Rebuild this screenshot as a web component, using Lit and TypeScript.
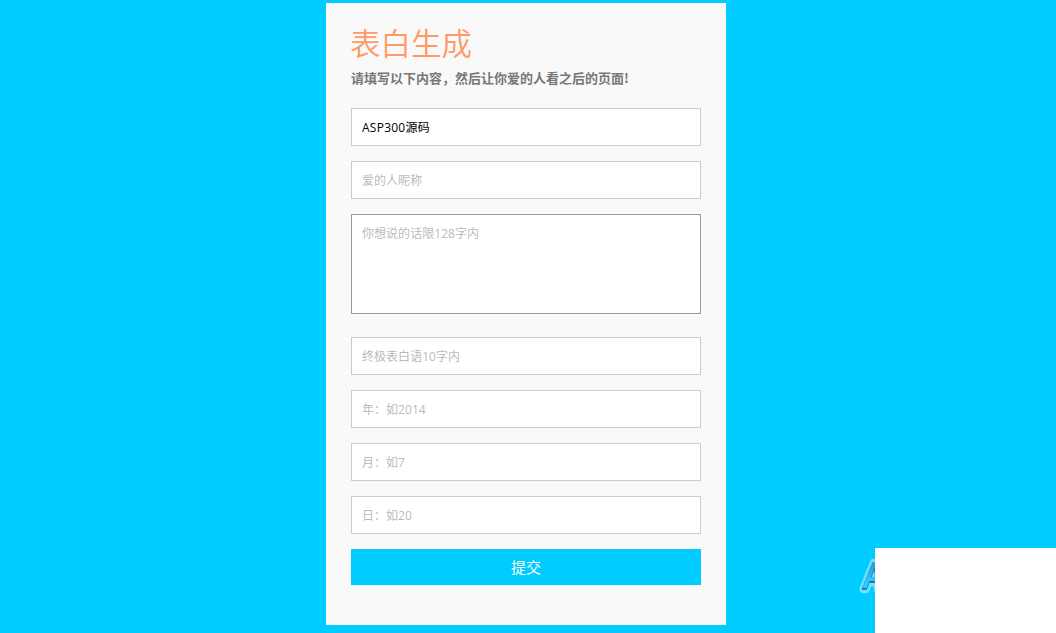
import { LitElement, html, css } from "lit";
import { customElement, property } from "lit/decorators.js";

@customElement("form-field")
export class FormField extends LitElement {
  static styles = css`
    :host {
      display: block;
    }

    .control {
      display: block;
      box-sizing: border-box;
      width: 350px;
      height: 38px;
      margin: 0;
      padding: 0 10px;
      border: 1px solid #ccc;
      border-radius: 0;
      background: #fff;
      color: #000;
      font: 12px/18px "Open Sans", "Noto Sans CJK SC", sans-serif;
      letter-spacing: 0.25px;
      outline: none;
    }

    .control::placeholder {
      color: #bbb;
      opacity: 1;
      letter-spacing: 0.04px;
    }

    .multiline {
      height: 100px;
      padding: 10px;
      border-color: #999;
      resize: none;
      overflow: auto;
    }
  `;

  @property() name = "";
  @property() value = "";
  @property() placeholder = "";
  @property({ type: Boolean }) multiline = false;

  render() {
    if (this.multiline) {
      return html`<textarea
        class="control multiline"
        name=${this.name}
        placeholder=${this.placeholder}
        .value=${this.value}
      ></textarea>`;
    }
    return html`<input
      class="control"
      type="text"
      name=${this.name}
      placeholder=${this.placeholder}
      .value=${this.value}
    />`;
  }
}

@customElement("app-root")
export class AppRoot extends LitElement {
  static styles = css`
    :host {
      display: block;
      position: relative;
      box-sizing: border-box;
      height: 100vh;
      padding: 3px 4px 0 0;
      overflow: hidden;
      background: #0cf;
      font-family: "Open Sans", "Noto Sans CJK SC", sans-serif;
    }

    .panel {
      box-sizing: border-box;
      width: 400px;
      height: 622px;
      margin: 0 auto;
      padding: 19px 25px 0;
      background: #f9f9f9;
    }

    .title {
      margin: 0 0 4px -1px;
      color: #f96;
      font: 350 30.5px/40px "Noto Sans CJK SC", sans-serif;
    }

    .subtitle {
      margin: 0 0 18px;
      color: #777;
      font: 700 13px/24px "Noto Sans CJK SC", sans-serif;
    }

    .fields {
      display: flex;
      flex-direction: column;
      gap: 15px;
    }

    .message {
      margin-bottom: 8px;
    }

    .submit {
      width: 350px;
      height: 36px;
      padding: 0;
      border: 0;
      background: #0cf;
      color: #fff;
      font: 15px/36px "Noto Sans CJK SC", sans-serif;
      cursor: pointer;
    }

    /* Corner logo, partly hidden by the popup */
    .logo {
      position: absolute;
      left: 856px;
      top: 550px;
      width: 40px;
      height: 50px;
    }

    .logo-text {
      font: italic 700 36px "Liberation Sans", sans-serif;
    }

    .popup {
      position: absolute;
      right: 0;
      bottom: 0;
      width: 181px;
      height: 85px;
      background: #fff;
    }
  `;

  render() {
    return html`
      <form class="panel" @submit=${(e: Event) => e.preventDefault()}>
        <h1 class="title">表白生成</h1>
        <p class="subtitle">请填写以下内容，然后让你爱的人看之后的页面!</p>
        <div class="fields">
          <form-field name="from" value="ASP300源码"></form-field>
          <form-field name="to" placeholder="爱的人昵称"></form-field>
          <form-field
            class="message"
            name="message"
            multiline
            placeholder="你想说的话限128字内"
          ></form-field>
          <form-field name="final" placeholder="终极表白语10字内"></form-field>
          <form-field name="year" placeholder="年：如2014"></form-field>
          <form-field name="month" placeholder="月：如7"></form-field>
          <form-field name="day" placeholder="日：如20"></form-field>
          <button class="submit" type="submit">提交</button>
        </div>
      </form>
      <svg class="logo" viewBox="0 0 40 50">
        <defs>
          <linearGradient id="logo-fill" x1="0" y1="0" x2="0" y2="1">
            <stop offset="0.2" stop-color="#1b9fe8" />
            <stop offset="0.7" stop-color="#2bd0ff" />
          </linearGradient>
        </defs>
        <g
          class="logo-text"
          stroke-linejoin="round"
          transform="translate(7 38.5) scale(0.75 1)"
        >
          <text fill="#6fe0ff" stroke="#6fe0ff" stroke-width="8.5">A</text>
          <text fill="#1a6f96" stroke="#1a6f96" stroke-width="1.5">A</text>
          <text x="0.5" y="-1" fill="url(#logo-fill)">A</text>
        </g>
      </svg>
      <div class="popup"></div>
    `;
  }
}
